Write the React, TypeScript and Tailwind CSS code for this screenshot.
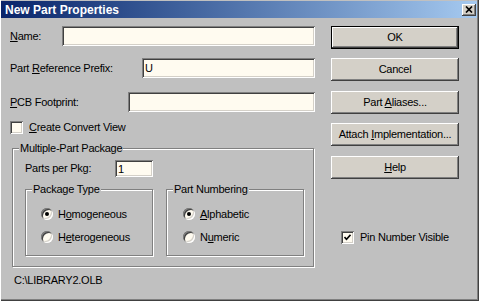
import React from "react";

const raised =
  "shadow-[inset_-1px_-1px_0_#404040,inset_1px_1px_0_#ffffff,inset_-2px_-2px_0_#808080,inset_2px_2px_0_#d4d0c8]";
const sunken =
  "shadow-[inset_1px_1px_0_#808080,inset_-1px_-1px_0_#ffffff,inset_2px_2px_0_#404040,inset_-2px_-2px_0_#d4d0c8]";
const etched = "border border-[#808080] shadow-[inset_1px_1px_0_#ffffff,1px_1px_0_#ffffff]";

const Btn = ({ children, isDefault, className = "" }: { children: React.ReactNode; isDefault?: boolean; className?: string }) => (
  <div
    className={`h-[23px] w-[128px] bg-[#d4d0c8] flex items-center justify-center ${
      isDefault ? "border border-black" : ""
    } ${className}`}
  >
    <div className={`w-full h-full flex items-center justify-center ${raised}`}>{children}</div>
  </div>
);

const Field = ({ value = "", className = "" }: { value?: string; className?: string }) => (
  <input
    readOnly
    defaultValue={value}
    className={`h-[20px] bg-[#fffbf0] ${sunken} px-[3px] text-[11px] outline-none ${className}`}
  />
);

const Check = ({ checked }: { checked?: boolean }) => (
  <div className={`w-[13px] h-[13px] bg-[#fffbf0] ${sunken} flex items-center justify-center shrink-0`}>
    {checked && (
      <svg width="7" height="7" viewBox="0 0 7 7">
        <path d="M0.5 3 L2.5 5.2 L6.5 0.8" stroke="#000" strokeWidth="1.6" fill="none" />
      </svg>
    )}
  </div>
);

const Radio = ({ on }: { on?: boolean }) => (
  <div className={`w-[12px] h-[12px] rounded-full bg-[#fffbf0] ${sunken} flex items-center justify-center shrink-0`}>
    {on && <div className="w-[4px] h-[4px] rounded-full bg-black" />}
  </div>
);

const Group = ({ label, className = "", children }: { label: string; className?: string; children: React.ReactNode }) => (
  <div className={`relative ${etched} ${className}`}>
    <span className="absolute -top-[8px] left-[6px] px-[1px] bg-[#c0c0c0] leading-[14px]">{label}</span>
    {children}
  </div>
);

const App = () => {
  return (
    <div
      className="w-[479px] h-[301px] bg-[#c0c0c0] flex flex-col text-[11px] tracking-[-0.25px] text-black overflow-hidden shadow-[inset_1px_0_0_#ffffff,inset_-1px_-1px_0_#404040,inset_-2px_-2px_0_#808080]"
      style={{ fontFamily: '"Liberation Sans", Arial, sans-serif' }}
    >
      <div className="h-[17px] mt-[1px] ml-[1px] mr-[2px] bg-linear-to-r from-[#0a246a] to-[#a6caf0] flex items-center justify-between">
        <span className="ml-[4px] text-white font-bold text-[12px] tracking-normal leading-none">New Part Properties</span>
        <div className={`w-[14px] h-[12px] mr-[1px] bg-[#d4d0c8] ${raised} flex items-center justify-center`}>
          <svg width="8" height="7" viewBox="0 0 8 7">
            <path d="M1 0.5 L7 6.5 M7 0.5 L1 6.5" stroke="#000" strokeWidth="1.7" />
          </svg>
        </div>
      </div>

      <div className="flex pl-[10px] pt-[8px]">
        <div className="w-[305px] flex flex-col">
          <div className="h-[20px] flex items-center">
            <span className="w-[52px]">
              <u>N</u>ame:
            </span>
            <Field className="flex-1" />
          </div>
          <div className="h-[20px] flex items-center mt-[12px]">
            <span className="w-[132px]">
              Part <u>R</u>eference Prefix:
            </span>
            <Field className="flex-1" value="U" />
          </div>
          <div className="h-[20px] flex items-center mt-[14px]">
            <span className="w-[118px]">
              <u>P</u>CB Footprint:
            </span>
            <Field className="flex-1" />
          </div>
          <div className="h-[13px] flex items-center mt-[9px]">
            <Check />
            <span className="ml-[6px]">
              <u>C</u>reate Convert View
            </span>
          </div>

          <Group label="Multiple-Part Package" className="ml-[2px] mt-[14px] w-[302px] h-[119px] pl-[12px] pt-[11px]">
            <div className="h-[17px] flex items-center">
              <span className="w-[90px]">Parts per Pkg:</span>
              <Field className="w-[38px] !h-[17px]" value="1" />
            </div>
            <div className="flex gap-[13px] mt-[12px]">
              <Group label="Package Type" className="w-[128px] h-[67px] pl-[15px] pt-[18px]">
                <div className="flex flex-col gap-[11px]">
                  <div className="h-[12px] flex items-center">
                    <Radio on />
                    <span className="ml-[5px]">
                      H<u>o</u>mogeneous
                    </span>
                  </div>
                  <div className="h-[12px] flex items-center">
                    <Radio />
                    <span className="ml-[5px]">
                      H<u>e</u>terogeneous
                    </span>
                  </div>
                </div>
              </Group>
              <Group label="Part Numbering" className="w-[138px] h-[67px] pl-[16px] pt-[18px]">
                <div className="flex flex-col gap-[11px]">
                  <div className="h-[12px] flex items-center">
                    <Radio on />
                    <span className="ml-[5px]">
                      <u>A</u>lphabetic
                    </span>
                  </div>
                  <div className="h-[12px] flex items-center">
                    <Radio />
                    <span className="ml-[5px]">
                      N<u>u</u>meric
                    </span>
                  </div>
                </div>
              </Group>
            </div>
          </Group>

          <div className="ml-[4px] mt-[7px] leading-[13px]">C:\LIBRARY2.OLB</div>
        </div>

        <div className="ml-[16px] flex flex-col">
          <Btn isDefault>OK</Btn>
          <Btn className="mt-[9px]">Cancel</Btn>
          <Btn className="mt-[10px]">
            <span>
              Part <u>A</u>liases...
            </span>
          </Btn>
          <Btn className="mt-[9px]">
            <span>
              Attach <u>I</u>mplementation...
            </span>
          </Btn>
          <Btn className="mt-[10px]">
            <span>
              <u>H</u>elp
            </span>
          </Btn>
          <div className="h-[13px] flex items-center mt-[52px] ml-[10px]">
            <Check checked />
            <span className="ml-[6px]">Pin Number Visible</span>
          </div>
        </div>
      </div>
    </div>
  );
};

export default App;
